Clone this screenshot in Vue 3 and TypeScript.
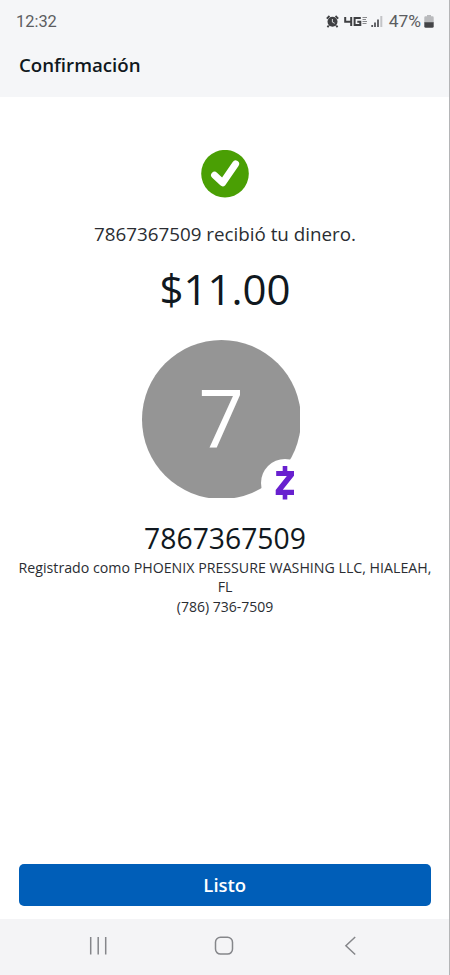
<script setup lang="ts">
interface Payment {
  recipient: string
  amount: string
  registeredAs: string
  phone: string
}

const payment: Payment = {
  recipient: '7867367509',
  amount: '$11.00',
  registeredAs: 'PHOENIX PRESSURE WASHING LLC, HIALEAH, FL',
  phone: '(786) 736-7509',
}

const initial = payment.recipient.charAt(0)
</script>

<template>
  <div class="screen">
    <header class="header">
      <div class="status-bar">
        <span class="clock">12:32</span>
        <div class="status-icons">
          <!-- alarm -->
          <svg class="alarm" width="13" height="13" viewBox="0 0 13 13">
            <circle cx="6.5" cy="6.8" r="5" fill="#3f4043" />
            <path d="M.8 3.6 3.5 1M12.2 3.6 9.5 1M2.7 10.4 1.5 12.3M10.3 10.4l1.2 1.9" stroke="#3f4043" stroke-width="1.8" />
            <path d="M6.4 4v3.1l2.3 1.2" fill="none" stroke="#d5d6d8" stroke-width="1" />
          </svg>
          <!-- network -->
          <svg class="network" width="24" height="11" viewBox="0 0 24 11">
            <path d="M1.2 1v4.8h6M7.2 1v9M16.8 2H10.6v7h5.7V5.7h-3" fill="none" stroke="#3f4043" stroke-width="2" />
            <path d="M18.5 1.5H23M18.5 3.5H22M18.5 5.5H23M18.5 7.500h4" stroke="#88898c" stroke-width="1" />
          </svg>
          <!-- signal -->
          <svg class="signal" width="12" height="13" viewBox="0 0 12 13">
            <path d="M1.2 12v-2M4 12V7.5M7 12V4.500" stroke="#55565a" stroke-width="1.8" />
            <path d="M10.3 12V1" stroke="#c3c4c7" stroke-width="2" />
          </svg>
          <span class="percent">47%</span>
          <!-- battery -->
          <svg class="battery" width="10" height="13" viewBox="0 0 10 13">
            <path d="M3 0h4v1.2h1.5Q9.7 1.2 9.7 2.5V8H.3V2.5Q.3 1.2 1.500 1.200H3Z" fill="#b9babd" />
            <path d="M.3 7.300h9.400v3.900q0 1.500-1.500 1.500H1.800q-1.500 0-1.500-1.500Z" fill="#434447" />
          </svg>
        </div>
      </div>
      <h1 class="title">Confirmación</h1>
    </header>

    <main class="content">
      <svg class="check" width="48" height="48" viewBox="0 0 48 48">
        <circle cx="24" cy="23.7" r="23.8" fill="#4a9f04" />
        <path d="M13.600 25.200 21.700 32.800 34.600 14" fill="none" stroke="#fff" stroke-width="7" stroke-linecap="round" stroke-linejoin="round" />
      </svg>
      <p class="message">{{ payment.recipient }} recibió tu dinero.</p>
      <p class="amount">{{ payment.amount }}</p>

      <div class="avatar">
        <div class="avatar-clip">
          <div class="avatar-circle"><span>{{ initial }}</span></div>
        </div>
        <div class="badge">
          <svg width="20" height="34" viewBox="0 0 20 34">
            <path d="M7.700 0h4.600v5H19v4.800L7.800 23.800H19v5.200h-6.700V33.500H7.700V29H.700V24L11.800 10H1.200V5h6.500Z" fill="#6820cf" />
          </svg>
        </div>
      </div>

      <h2 class="recipient">{{ payment.recipient }}</h2>
      <p class="registered">Registrado como {{ payment.registeredAs }}</p>
      <p class="phone">{{ payment.phone }}</p>
    </main>

    <footer class="actions">
      <button type="button" class="done">Listo</button>
    </footer>

    <nav class="nav-bar">
      <svg width="20" height="20" viewBox="0 0 20 20">
        <path d="M2.700 1v17.500M10.200 1v17.500M17.700 1v17.500" stroke="#85868a" stroke-width="1.500" />
      </svg>
      <svg width="20" height="20" viewBox="0 0 20 20">
        <rect x="1.500" y="1.300" width="17" height="16.800" rx="5" fill="none" stroke="#85868a" stroke-width="1.500" />
      </svg>
      <svg width="20" height="20" viewBox="0 0 20 20">
        <path d="M15.200 1 5.900 9.700l9.300 8.800" fill="none" stroke="#85868a" stroke-width="1.500" />
      </svg>
    </nav>
  </div>
</template>

<style>
body {
  margin: 0;
  background: #fff;
}
</style>

<style scoped>
.screen {
  box-sizing: border-box;
  display: flex;
  flex-direction: column;
  width: 450px;
  height: 975px;
  border-right: 1px solid #b4b5b7;
  background: #fff;
  color: #101820;
  font-family: "Open Sans", "Noto Sans", sans-serif;
  overflow: hidden;
}

.header {
  height: 97px;
  background: #f5f6f8;
}

.status-bar {
  display: flex;
  justify-content: space-between;
  align-items: center;
  height: 43px;
  padding: 0 15px 0 16px;
  color: #5c5d61;
  font-family: Roboto, sans-serif;
  font-size: 16.4px;
}

.status-icons {
  display: flex;
  align-items: center;
}

.network {
  margin-left: 5px;
}

.signal {
  margin-left: 3px;
}

.percent {
  margin-left: 6px;
  font-size: 17.4px;
  line-height: 20px;
  margin-top: -1px;
}

.battery {
  margin-left: 3px;
}

.title {
  margin: 0;
  padding-left: 19px;
  font-size: 18.7px;
  font-weight: 600;
  line-height: 44px;
}

.content {
  flex: 1;
  display: flex;
  flex-direction: column;
  align-items: center;
  padding: 53px 16px 0 17px;
  text-align: center;
}

.content p {
  margin: 0;
}

.check {
  flex: none;
}

.content .message {
  margin-top: 22px;
  color: #2a2d32;
  font-size: 18.8px;
  line-height: 28px;
}

.content .amount {
  margin-top: 12px;
  font-size: 42px;
  line-height: 58px;
}

.avatar {
  position: relative;
  width: 159px;
  height: 159px;
  margin: 22px 8px 0 0;
}

/* the circle is slightly cut off at its right and bottom edges */
.avatar-clip {
  width: 158px;
  height: 158px;
  overflow: hidden;
}

.avatar-circle {
  display: flex;
  align-items: center;
  justify-content: center;
  box-sizing: border-box;
  width: 159px;
  height: 159px;
  padding-bottom: 5px;
  border-radius: 50%;
  background: #959595;
  color: #fff;
  font-size: 80px;
  line-height: 1;
}

.badge {
  position: absolute;
  left: 119px;
  top: 119px;
  display: flex;
  align-items: center;
  justify-content: center;
  width: 48px;
  height: 48px;
  border-radius: 50%;
  background: #fff;
}

.recipient {
  margin: 18px 0 0;
  font-size: 28.3px;
  font-weight: 400;
  line-height: 42px;
}

.content .registered,
.content .phone {
  color: #2a2d32;
  font-size: 14.2px;
  line-height: 19px;
}

.content .registered {
  margin-top: -1px;
}

.content .phone {
  margin-top: 1px;
  font-size: 14px;
}

.actions {
  padding: 0 18px 13px 18.5px;
}

.done {
  display: block;
  width: 100%;
  height: 42px;
  padding: 0;
  border: 0;
  border-radius: 5px;
  background: #005eb8;
  color: #fff;
  font: 600 18.5px/42px "Open Sans", "Noto Sans", sans-serif;
}

.nav-bar {
  display: flex;
  justify-content: space-between;
  box-sizing: border-box;
  height: 56px;
  padding: 17px 89px 0 88px;
  background: #f4f4f6;
}
</style>
